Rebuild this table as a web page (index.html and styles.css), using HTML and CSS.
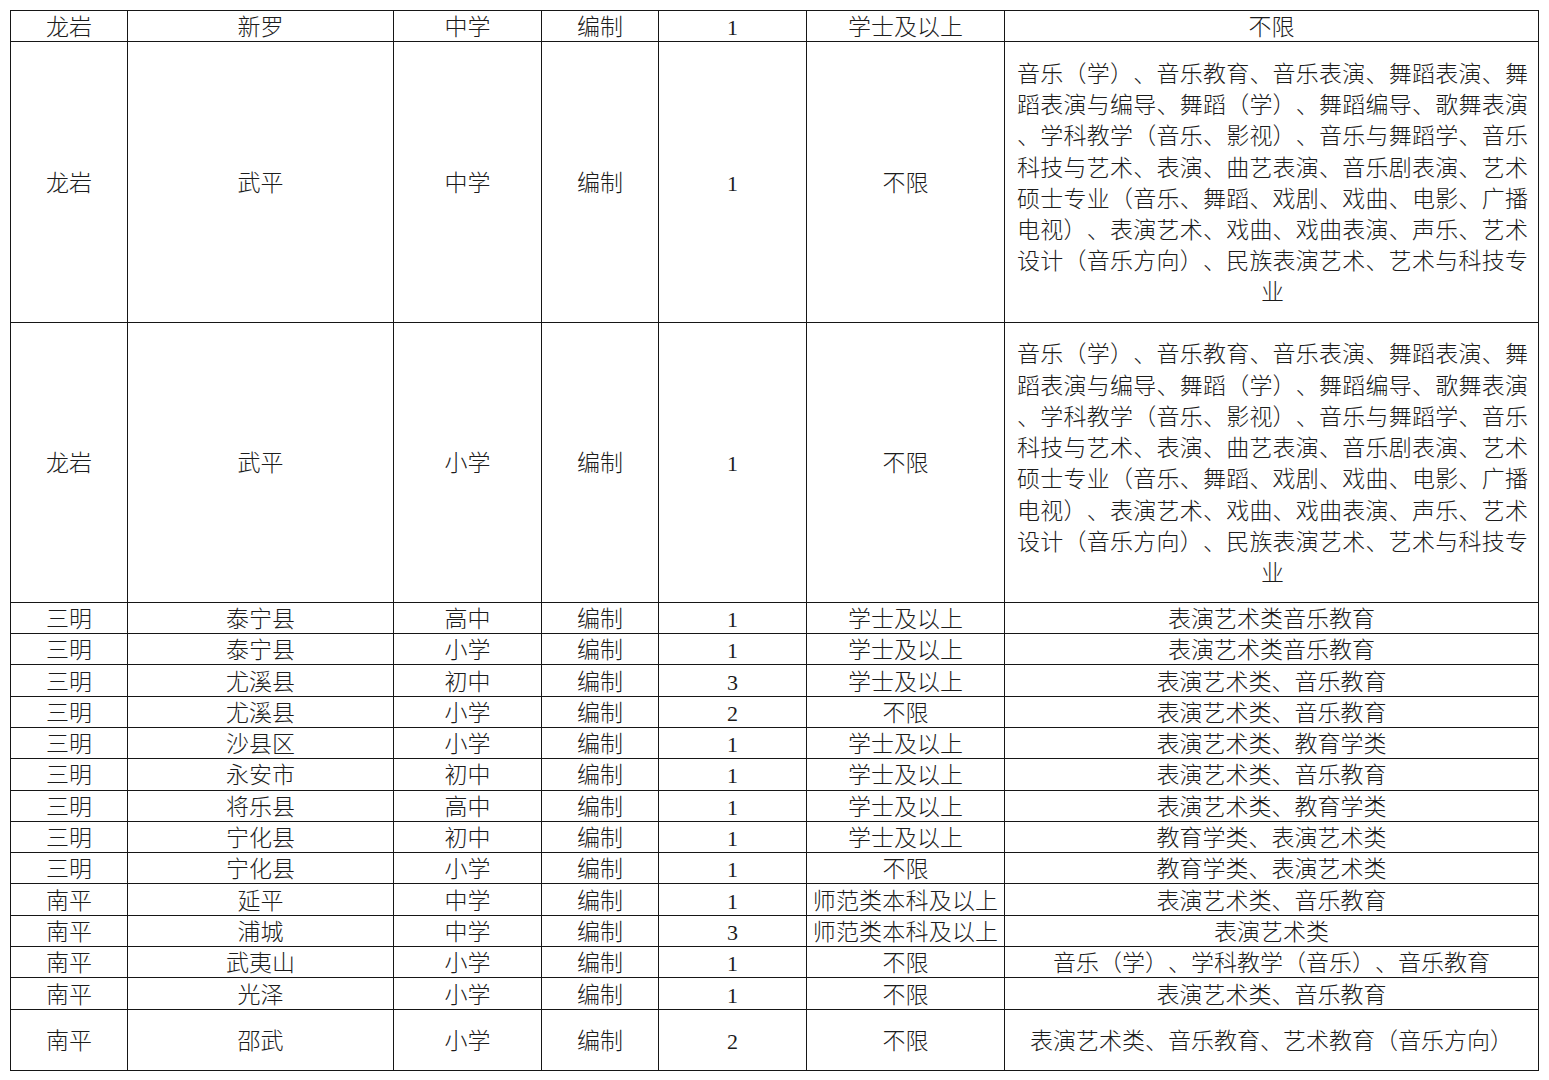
FILE: index.html
```html
<!DOCTYPE html>
<html lang="zh-CN">
<head>
<meta charset="utf-8">
<title>招聘岗位表</title>
<link rel="stylesheet" href="styles.css">
</head>
<body>
<table class="grid">
  <colgroup>
    <col class="c1"><col class="c2"><col class="c3"><col class="c4"><col class="c5"><col class="c6"><col class="c7">
  </colgroup>
  <tbody>
    <tr class="first"><td>龙岩</td><td>新罗</td><td>中学</td><td>编制</td><td class="num">1</td><td>学士及以上</td><td>不限</td></tr>
    <tr class="tall">
      <td>龙岩</td><td>武平</td><td>中学</td><td>编制</td><td class="num">1</td><td>不限</td>
      <td class="long">
        <div class="ln">音乐（学）、音乐教育、音乐表演、舞蹈表演、舞</div>
        <div class="ln">蹈表演与编导、舞蹈（学）、舞蹈编导、歌舞表演</div>
        <div class="ln">、学科教学（音乐、影视）、音乐与舞蹈学、音乐</div>
        <div class="ln">科技与艺术、表演、曲艺表演、音乐剧表演、艺术</div>
        <div class="ln">硕士专业（音乐、舞蹈、戏剧、戏曲、电影、广播</div>
        <div class="ln">电视）、表演艺术、戏曲、戏曲表演、声乐、艺术</div>
        <div class="ln">设计（音乐方向）、民族表演艺术、艺术与科技专</div>
        <div class="ln end">业</div>
      </td>
    </tr>
    <tr class="tall2">
      <td>龙岩</td><td>武平</td><td>小学</td><td>编制</td><td class="num">1</td><td>不限</td>
      <td class="long">
        <div class="ln">音乐（学）、音乐教育、音乐表演、舞蹈表演、舞</div>
        <div class="ln">蹈表演与编导、舞蹈（学）、舞蹈编导、歌舞表演</div>
        <div class="ln">、学科教学（音乐、影视）、音乐与舞蹈学、音乐</div>
        <div class="ln">科技与艺术、表演、曲艺表演、音乐剧表演、艺术</div>
        <div class="ln">硕士专业（音乐、舞蹈、戏剧、戏曲、电影、广播</div>
        <div class="ln">电视）、表演艺术、戏曲、戏曲表演、声乐、艺术</div>
        <div class="ln">设计（音乐方向）、民族表演艺术、艺术与科技专</div>
        <div class="ln end">业</div>
      </td>
    </tr>
    <tr class="r"><td>三明</td><td>泰宁县</td><td>高中</td><td>编制</td><td class="num">1</td><td>学士及以上</td><td>表演艺术类音乐教育</td></tr>
    <tr class="r"><td>三明</td><td>泰宁县</td><td>小学</td><td>编制</td><td class="num">1</td><td>学士及以上</td><td>表演艺术类音乐教育</td></tr>
    <tr class="r"><td>三明</td><td>尤溪县</td><td>初中</td><td>编制</td><td class="num">3</td><td>学士及以上</td><td>表演艺术类、音乐教育</td></tr>
    <tr class="r"><td>三明</td><td>尤溪县</td><td>小学</td><td>编制</td><td class="num">2</td><td>不限</td><td>表演艺术类、音乐教育</td></tr>
    <tr class="r"><td>三明</td><td>沙县区</td><td>小学</td><td>编制</td><td class="num">1</td><td>学士及以上</td><td>表演艺术类、教育学类</td></tr>
    <tr class="r"><td>三明</td><td>永安市</td><td>初中</td><td>编制</td><td class="num">1</td><td>学士及以上</td><td>表演艺术类、音乐教育</td></tr>
    <tr class="r"><td>三明</td><td>将乐县</td><td>高中</td><td>编制</td><td class="num">1</td><td>学士及以上</td><td>表演艺术类、教育学类</td></tr>
    <tr class="r"><td>三明</td><td>宁化县</td><td>初中</td><td>编制</td><td class="num">1</td><td>学士及以上</td><td>教育学类、表演艺术类</td></tr>
    <tr class="r"><td>三明</td><td>宁化县</td><td>小学</td><td>编制</td><td class="num">1</td><td>不限</td><td>教育学类、表演艺术类</td></tr>
    <tr class="r"><td>南平</td><td>延平</td><td>中学</td><td>编制</td><td class="num">1</td><td class="tight">师范类本科及以上</td><td>表演艺术类、音乐教育</td></tr>
    <tr class="r"><td>南平</td><td>浦城</td><td>中学</td><td>编制</td><td class="num">3</td><td class="tight">师范类本科及以上</td><td>表演艺术类</td></tr>
    <tr class="r"><td>南平</td><td>武夷山</td><td>小学</td><td>编制</td><td class="num">1</td><td>不限</td><td>音乐（学）、学科教学（音乐）、音乐教育</td></tr>
    <tr class="r"><td>南平</td><td>光泽</td><td>小学</td><td>编制</td><td class="num">1</td><td>不限</td><td>表演艺术类、音乐教育</td></tr>
    <tr class="last"><td>南平</td><td>邵武</td><td>小学</td><td>编制</td><td class="num">2</td><td>不限</td><td>表演艺术类、音乐教育、艺术教育（音乐方向）</td></tr>
  </tbody>
</table>
</body>
</html>
```

FILE: styles.css
```css
html, body {
  background: #ffffff;
}
body {
  margin: 10px 0 0 10px;
  font-family: "Liberation Serif", "Noto Sans CJK SC", serif;
  color: #1c1c1c;
}
.grid {
  border-collapse: collapse;
  table-layout: fixed;
  width: 1528px;
  font-size: 23px;
  line-height: 24px;
  text-spacing-trim: space-all;
}
.c1 { width: 117px; }
.c2 { width: 266px; }
.c3 { width: 148px; }
.c4 { width: 117px; }
.c5 { width: 148px; }
.c6 { width: 198px; }
.c7 { width: 534px; }
.grid td {
  border: 1.5px solid #161616;
  padding: 4px 2px 0;
  text-align: center;
  vertical-align: middle;
  white-space: nowrap;
  font-weight: 300;
}
.grid td.num {
  font-family: "Liberation Serif", serif;
  font-size: 22px;
}
.grid td.tight {
  padding: 4px 0 0;
  letter-spacing: 0.2px;
}
.first td { height: 25.8px; }
.r td { height: 26.3px; }
.tall td { height: 276px; }
.tall2 td { height: 275px; }
.last td { height: 56.2px; }
.grid td.long {
  padding: 4px 10px 0 12px;
  white-space: normal;
  line-height: 31.2px;
}
.ln {
  text-align: justify;
  text-align-last: justify;
  white-space: nowrap;
}
.ln.end {
  text-align: center;
  text-align-last: center;
}
```
